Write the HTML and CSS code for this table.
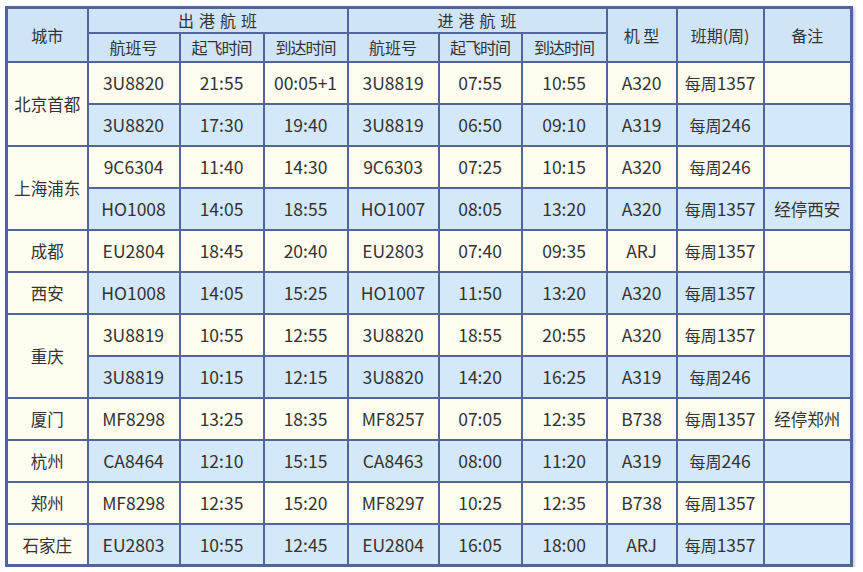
FILE: index.html
```html
<!DOCTYPE html>
<html lang="zh">
<head>
<meta charset="utf-8">
<title>航班时刻表</title>
<link rel="stylesheet" href="styles.css">
</head>
<body>
<div class="page">
<table class="sched">
  <colgroup>
    <col class="c-city"><col class="c-no"><col class="c-t1"><col class="c-t2">
    <col class="c-no2"><col class="c-t3"><col class="c-t4"><col class="c-type">
    <col class="c-week"><col class="c-note">
  </colgroup>
  <thead>
    <tr class="h1">
      <th rowspan="2">城市</th>
      <th colspan="3" class="spaced">出港航班</th>
      <th colspan="3" class="spaced">进港航班</th>
      <th rowspan="2">机 型</th>
      <th rowspan="2">班期(周)</th>
      <th rowspan="2">备注</th>
    </tr>
    <tr class="h2">
      <th>航班号</th><th class="tight">起飞时间</th><th class="tight">到达时间</th>
      <th>航班号</th><th class="tight">起飞时间</th><th class="tight">到达时间</th>
    </tr>
  </thead>
  <tbody>
    <tr class="odd">
      <td rowspan="2" class="city">北京首都</td>
      <td>3U8820</td><td>21:55</td><td>00:05+1</td><td>3U8819</td><td>07:55</td><td>10:55</td><td>A320</td><td><span class="zh">每周</span>1357</td><td class="note"></td>
    </tr>
    <tr class="even">
      <td>3U8820</td><td>17:30</td><td>19:40</td><td>3U8819</td><td>06:50</td><td>09:10</td><td>A319</td><td><span class="zh">每周</span>246</td><td class="note"></td>
    </tr>
    <tr class="odd">
      <td rowspan="2" class="city">上海浦东</td>
      <td>9C6304</td><td>11:40</td><td>14:30</td><td>9C6303</td><td>07:25</td><td>10:15</td><td>A320</td><td><span class="zh">每周</span>246</td><td class="note"></td>
    </tr>
    <tr class="even">
      <td>HO1008</td><td>14:05</td><td>18:55</td><td>HO1007</td><td>08:05</td><td>13:20</td><td>A320</td><td><span class="zh">每周</span>1357</td><td class="note">经停西安</td>
    </tr>
    <tr class="odd">
      <td class="city">成都</td>
      <td>EU2804</td><td>18:45</td><td>20:40</td><td>EU2803</td><td>07:40</td><td>09:35</td><td>ARJ</td><td><span class="zh">每周</span>1357</td><td class="note"></td>
    </tr>
    <tr class="even">
      <td class="city">西安</td>
      <td>HO1008</td><td>14:05</td><td>15:25</td><td>HO1007</td><td>11:50</td><td>13:20</td><td>A320</td><td><span class="zh">每周</span>1357</td><td class="note"></td>
    </tr>
    <tr class="odd">
      <td rowspan="2" class="city">重庆</td>
      <td>3U8819</td><td>10:55</td><td>12:55</td><td>3U8820</td><td>18:55</td><td>20:55</td><td>A320</td><td><span class="zh">每周</span>1357</td><td class="note"></td>
    </tr>
    <tr class="even">
      <td>3U8819</td><td>10:15</td><td>12:15</td><td>3U8820</td><td>14:20</td><td>16:25</td><td>A319</td><td><span class="zh">每周</span>246</td><td class="note"></td>
    </tr>
    <tr class="odd">
      <td class="city">厦门</td>
      <td>MF8298</td><td>13:25</td><td>18:35</td><td>MF8257</td><td>07:05</td><td>12:35</td><td>B738</td><td><span class="zh">每周</span>1357</td><td class="note">经停郑州</td>
    </tr>
    <tr class="even">
      <td class="city">杭州</td>
      <td>CA8464</td><td>12:10</td><td>15:15</td><td>CA8463</td><td>08:00</td><td>11:20</td><td>A319</td><td><span class="zh">每周</span>246</td><td class="note"></td>
    </tr>
    <tr class="odd">
      <td class="city">郑州</td>
      <td>MF8298</td><td>12:35</td><td>15:20</td><td>MF8297</td><td>10:25</td><td>12:35</td><td>B738</td><td><span class="zh">每周</span>1357</td><td class="note"></td>
    </tr>
    <tr class="even">
      <td class="city">石家庄</td>
      <td>EU2803</td><td>10:55</td><td>12:45</td><td>EU2804</td><td>16:05</td><td>18:00</td><td>ARJ</td><td><span class="zh">每周</span>1357</td><td class="note"></td>
    </tr>
  </tbody>
</table>
</div>
</body>
</html>
```
FILE: styles.css
```css
html, body {
  margin: 0;
  padding: 0;
  background: #ffffff;
}

.page {
  padding: 6px 0 0 5px;
}

.sched {
  border-collapse: collapse;
  table-layout: fixed;
  width: 845px;
  border: 3px solid #52659a;
  box-shadow: 2px 2px 2px rgba(60, 70, 100, 0.25);
  font-family: "Noto Sans CJK SC", "Noto Sans", sans-serif;
  color: #333333;
}

.c-city { width: 81px; }
.c-no { width: 92px; }
.c-t1 { width: 84px; }
.c-t2 { width: 84px; }
.c-no2 { width: 91px; }
.c-t3 { width: 83px; }
.c-t4 { width: 85px; }
.c-type { width: 70px; }
.c-week { width: 87px; }
.c-note { width: 88px; }

.sched th,
.sched td {
  border: 2px solid #52659a;
  padding: 0;
  text-align: center;
  vertical-align: middle;
  white-space: nowrap;
  overflow: hidden;
}

.sched th {
  background: #cfe4f6;
  font-weight: normal;
  font-size: 16px;
  line-height: 18px;
}

.h1 { height: 25px; }
.h2 { height: 29px; }

.spaced { letter-spacing: 5px; text-indent: 5px; }
.tight { letter-spacing: -1px; }

.sched td {
  font-size: 17.5px;
  line-height: 22px;
  padding-top: 1px;
}

.sched tbody tr { height: 42px; }

.odd td { background: #fffdf0; }
.even td { background: #d3e8f8; }

.sched td.city {
  background: #fffdf0;
  font-size: 16.5px;
}

.zh { font-size: 16px; }

.sched td.note { font-size: 16.5px; }
```
